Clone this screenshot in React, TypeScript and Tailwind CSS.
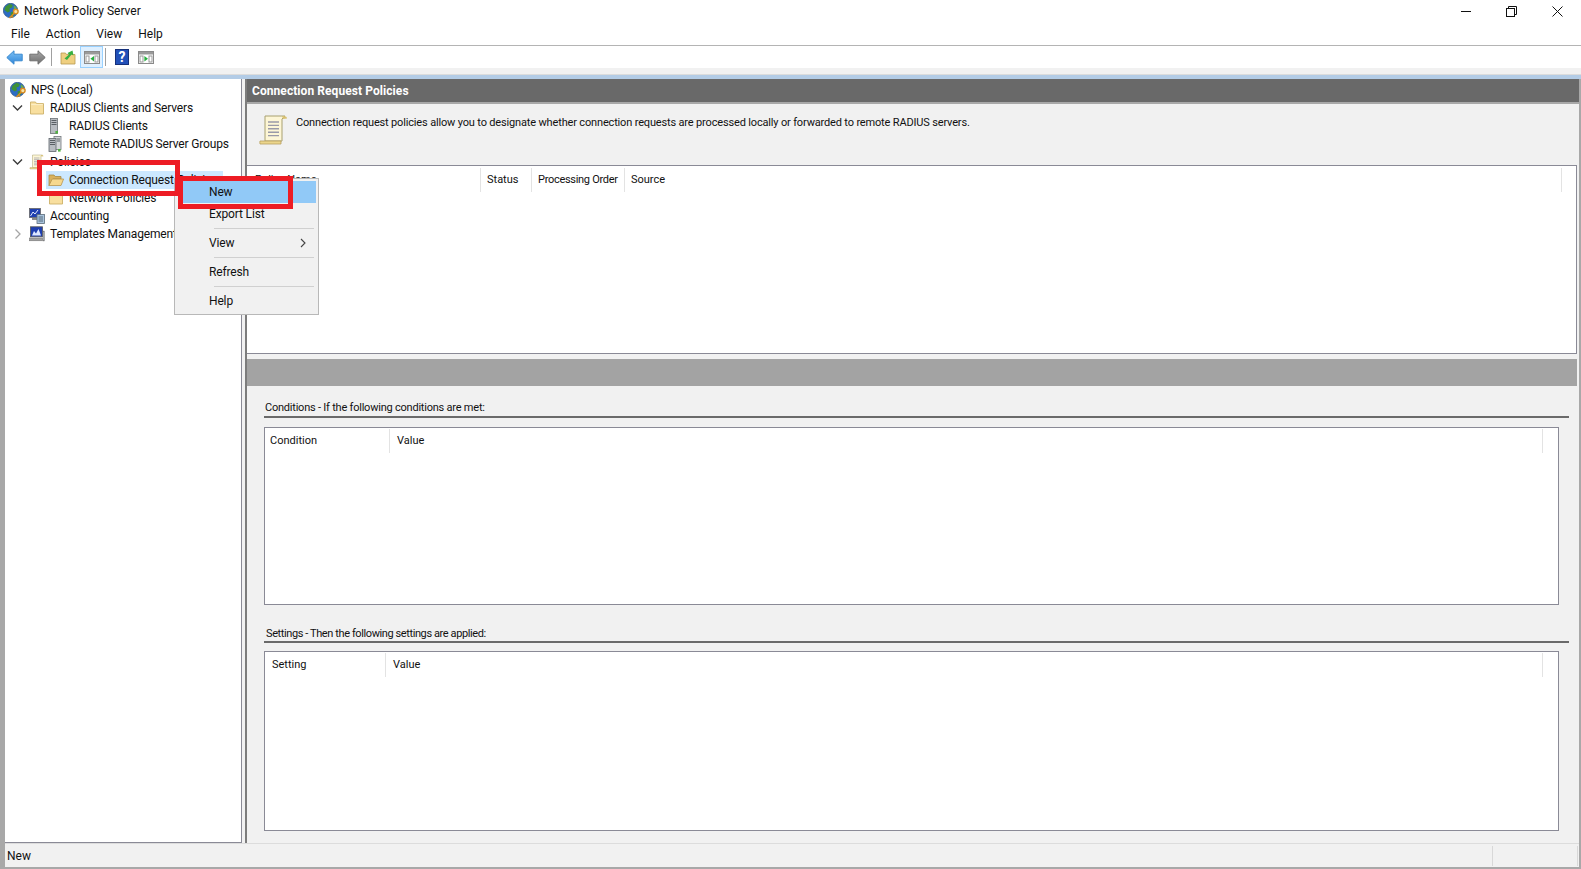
import React from "react";

const font = { fontFamily: 'Roboto, "Liberation Sans", sans-serif' };

function GlobeKey({ size = 17 }: { size?: number }) {
  return (
    <svg width={size} height={size} viewBox="0 0 17 17" className="shrink-0">
      <circle cx="7.5" cy="7.5" r="7.2" fill="#2c6cc4" stroke="#2a4f80" strokeWidth="0.7" />
      <path d="M2.6 3.4 L6.6 0.8 L9.8 2 L9 4.6 L6.4 5.4 L7 8.2 L4.6 9.4 L1.4 7 Z" fill="#3f9136" />
      <path d="M7.6 9.4 L10.6 8.4 L11.6 11 L9.6 14.2 L7.8 13.4 Z" fill="#3f9136" />
      <path d="M11 2.2 L13.6 4.4 L13 6.4 L10.6 5.2 Z" fill="#68ad48" />
      <circle cx="12.8" cy="8.6" r="2.3" fill="#f4e2a8" stroke="#d98c22" strokeWidth="1.4" />
      <path d="M11.2 10.3 L6.4 15 M8.4 13 L9.9 14.5" stroke="#d98c22" strokeWidth="1.6" fill="none" />
    </svg>
  );
}

function Folder({ open = false }: { open?: boolean }) {
  if (open)
    return (
      <svg width="16" height="16" viewBox="0 0 16 16" className="shrink-0">
        <path d="M1 13.5 V3 H6 L7.2 4.5 H13 V7 H5 Z" fill="#d9b25e" stroke="#a88a45" strokeWidth="0.8" />
        <path d="M1 13.5 L4.2 7 H15.6 L13 13.5 Z" fill="#f6d88e" stroke="#b89650" strokeWidth="0.8" />
      </svg>
    );
  return (
    <svg width="16" height="16" viewBox="0 0 16 16" className="shrink-0">
      <path d="M1.5 14 V2 H6.5 L7.5 3.6 H14.5 V14 Z" fill="#f8df9f" stroke="#cdb169" strokeWidth="0.9" />
      <path d="M2.2 4.6 H13.8" stroke="#fdf2ce" strokeWidth="0.9" />
    </svg>
  );
}

function ServerOne() {
  return (
    <svg width="16" height="16" viewBox="0 0 16 16" className="shrink-0">
      <rect x="2.5" y="0.5" width="7" height="15" fill="#b8bcc2" stroke="#6a7076" strokeWidth="0.8" />
      <path d="M3.5 2.5 H8.5 M3.5 4.5 H8.5 M3.5 6.5 H8.5" stroke="#4d5359" strokeWidth="0.9" />
      <rect x="7.4" y="13" width="2.6" height="2.6" fill="#52b043" />
    </svg>
  );
}

function ServerGroup() {
  return (
    <svg width="16" height="16" viewBox="0 0 16 16" className="shrink-0">
      <rect x="6" y="0.5" width="7" height="13" fill="#d4d7da" stroke="#70767c" strokeWidth="0.8" />
      <rect x="1" y="2.5" width="7" height="13" fill="#b8bcc2" stroke="#5f656c" strokeWidth="0.8" />
      <path d="M2 4.5 H7 M2 6.5 H7 M2 8.5 H7 M9 3 H12 M9 5 H12" stroke="#4d5359" strokeWidth="0.9" />
      <rect x="10" y="13" width="2.6" height="2.6" fill="#52b043" />
    </svg>
  );
}

function Scroll({ size = 16 }: { size?: number }) {
  return (
    <svg width={size} height={size} viewBox="0 0 16 16" className="shrink-0">
      <path d="M3.5 1 H13.5 L12 2.5 V13.5 H3.5 Z" fill="#fdf6d6" stroke="#a8a070" strokeWidth="0.5" />
      <path d="M12 1 Q14.5 1 14.5 2.2 L12.5 2.5 Z" fill="#d8c070" />
      <path d="M1 13.5 H11.5 V15 H1 Q0.8 14 1 13.5 Z" fill="#ecd68c" stroke="#b8a060" strokeWidth="0.4" />
      <path d="M5 4 H10.5 M5 5.7 H10.5 M5 7.4 H10.5 M5 9.1 H10.5 M5 10.8 H10.5" stroke="#9a9aa8" strokeWidth="0.7" />
    </svg>
  );
}

function Accounting() {
  return (
    <svg width="16" height="16" viewBox="0 0 16 16" className="shrink-0">
      <rect x="0.5" y="0.5" width="11" height="9" fill="#1f3fb0" stroke="#666" strokeWidth="0.8" />
      <path d="M1.5 8 L4 4 L6 6 L9 2" stroke="#dfe8ff" strokeWidth="1" fill="none" />
      <rect x="3" y="10" width="6" height="2" fill="#8a8a8a" />
      <rect x="8" y="6.5" width="7.5" height="9" fill="#a9c4dd" stroke="#5d6d7a" strokeWidth="0.8" />
      <path d="M9.5 9 H14 M9.5 11 H14 M9.5 13 H14" stroke="#456" strokeWidth="0.8" />
    </svg>
  );
}

function Templates() {
  return (
    <svg width="16" height="16" viewBox="0 0 16 16" className="shrink-0">
      <rect x="1.5" y="0.8" width="12" height="10" fill="#1f3fb0" stroke="#555" strokeWidth="0.8" />
      <path d="M3 9.5 L5 5 L7 7.5 L9.5 3 L12 9.5 Z" fill="#dfe8ff" />
      <rect x="0.5" y="12" width="13" height="2.8" fill="#a4a4a4" stroke="#6a6a6a" strokeWidth="0.5" />
      <rect x="14" y="5" width="1.6" height="10" fill="#b0b4b8" stroke="#777" strokeWidth="0.4" />
    </svg>
  );
}

function Chevron({ open }: { open: boolean }) {
  return (
    <svg width="11" height="10" viewBox="0 0 11 10" className="shrink-0">
      {open ? (
        <path d="M1 2.5 L5.5 7 L10 2.5" fill="none" stroke="#3c3c3c" strokeWidth="1.4" />
      ) : (
        <path d="M3.5 0.5 L8 5 L3.5 9.5" fill="none" stroke="#a6a6a6" strokeWidth="1.3" />
      )}
    </svg>
  );
}

function Arrow({ id, from, to, stroke, flip }: { id: string; from: string; to: string; stroke: string; flip?: boolean }) {
  return (
    <svg width="17" height="15" viewBox="0 0 17 15" className={flip ? "shrink-0 -scale-x-100" : "shrink-0"}>
      <defs>
        <linearGradient id={id} x1="0" y1="0" x2="0" y2="1">
          <stop offset="0" stopColor={from} />
          <stop offset="1" stopColor={to} />
        </linearGradient>
      </defs>
      <path d="M0.8 7.5 L8 0.8 V4.2 H16.2 V10.8 H8 V14.2 Z" fill={`url(#${id})`} stroke={stroke} strokeWidth="1" />
    </svg>
  );
}

function PaneIcon({ side }: { side: "left" | "right" }) {
  return (
    <svg width="16" height="13" viewBox="0 0 16 13" className="shrink-0">
      <rect x="0.5" y="0.5" width="15" height="12" fill="#fff" stroke="#8a8a8a" />
      <rect x="1" y="1" width="14" height="2.5" fill="#9a9a9a" />
      <rect x="2" y="5" width="3" height="6" fill="none" stroke="#9a9a9a" />
      <rect x="11" y="5" width="3" height="6" fill="none" stroke="#9a9a9a" />
      {side === "left" ? <path d="M10 5 V10.6 L6.4 7.8 Z" fill="#28b040" /> : <path d="M6.4 5 V10.6 L10 7.8 Z" fill="#28b040" />}
    </svg>
  );
}

function TreeRow({
  indent,
  chevron,
  icon,
  label,
}: {
  indent: "root" | "one" | "two";
  chevron?: "open" | "closed";
  icon: React.ReactNode;
  label: string;
}) {
  const pad = indent === "root" ? "pl-[5px]" : indent === "one" ? "pl-[7px]" : "pl-[43px]";
  return (
    <div className={`flex h-[18px] items-center whitespace-nowrap ${pad}`}>
      {indent === "one" && (
        <div className="flex w-[17px] shrink-0 items-center">{chevron && <Chevron open={chevron === "open"} />}</div>
      )}
      {icon}
      <span className={indent === "root" ? "ml-[4px]" : "ml-[5px]"}>{label}</span>
    </div>
  );
}

function ColumnHead({ w, label, pad = "pl-[7px]" }: { w: string; label: string; pad?: string }) {
  return (
    <div className={`flex h-[24px] shrink-0 items-center whitespace-nowrap border-r border-[#e3e3e3] ${w} ${pad}`}>{label}</div>
  );
}

function MenuSep() {
  return <div className="ml-[31px] mr-[2px] my-[3px] h-px bg-[#d0d0d0]" />;
}

function MenuItem({ label, active, arrow }: { label: string; active?: boolean; arrow?: boolean }) {
  return (
    <div className={`flex h-[22px] items-center justify-between pl-[26px] pr-[9px] ${active ? "bg-[#91c9f7]" : ""}`}>
      <span>{label}</span>
      {arrow && (
        <svg width="8" height="10" viewBox="0 0 8 10">
          <path d="M2 1 L6 5 L2 9" fill="none" stroke="#444" strokeWidth="1.1" />
        </svg>
      )}
    </div>
  );
}

export default function App() {
  return (
    <div style={font} className="relative flex h-[869px] w-[1581px] flex-col overflow-hidden bg-white text-[12px] text-[#111]">
      {/* title bar */}
      <div className="flex h-[22px] shrink-0 items-center pl-[3px]">
        <GlobeKey />
        <span className="ml-[4px]">Network Policy Server</span>
        <div className="ml-auto flex items-center pr-[18px]">
          <svg width="11" height="11" viewBox="0 0 11 11"><path d="M0 5.5 H10" stroke="#111" strokeWidth="1" /></svg>
          <svg width="11" height="11" viewBox="0 0 11 11" className="ml-[34px]">
            <rect x="0.5" y="2.5" width="8" height="8" fill="none" stroke="#111" />
            <path d="M2.5 2.5 V0.5 H10.5 V8.5 H8.5" fill="none" stroke="#111" />
          </svg>
          <svg width="11" height="11" viewBox="0 0 11 11" className="ml-[35px]">
            <path d="M0.5 0.5 L10.5 10.5 M10.5 0.5 L0.5 10.5" stroke="#111" strokeWidth="1" />
          </svg>
        </div>
      </div>

      {/* menu bar */}
      <div className="flex h-[24px] shrink-0 items-center gap-[16px] border-b border-[#b4b4b4] pl-[11px]">
        <span>File</span>
        <span>Action</span>
        <span>View</span>
        <span>Help</span>
      </div>

      {/* toolbar */}
      <div className="flex h-[22px] shrink-0 items-center pl-[6px]">
        <Arrow id="back" from="#7cc0f5" to="#2f86d8" stroke="#3a8ad0" />
        <div className="ml-[6px]"><Arrow id="fwd" from="#a8a8a8" to="#6e6e6e" stroke="#707070" flip /></div>
        <div className="ml-[5px] h-[18px] w-px bg-[#a0a0a0]" />
        <svg width="16" height="16" viewBox="0 0 16 16" className="ml-[8px] shrink-0">
          <path d="M1 15 V4 H5.5 L6.5 5.5 H15 V15 Z" fill="#efcf80" stroke="#b89a50" strokeWidth="0.8" />
          <path d="M4.5 9.5 L9 5.5 L7.5 4 L12.5 1.5 L13.5 6.5 L11.5 5.5 L7 11 Z" fill="#38b040" />
        </svg>
        <div className="ml-[4px] flex h-[22px] w-[23px] items-center justify-center border border-[#99d1ff] bg-[#dff0ff]">
          <PaneIcon side="left" />
        </div>
        <div className="ml-[2px] h-[18px] w-px bg-[#a0a0a0]" />
        <div className="ml-[9px] flex h-[16px] w-[14px] items-center justify-center border border-[#15307a] bg-[#2150b8] text-[14px] font-bold leading-none text-white">?</div>
        <div className="ml-[9px]"><PaneIcon side="right" /></div>
      </div>

      {/* dotted strip */}
      <div className="h-[7px] shrink-0 border-b border-[#dcdcdc] bg-[#f1f1f1]" />
      <div className="h-[4px] shrink-0 bg-[#b3cce6]" />

      {/* workspace */}
      <div className="flex min-h-0 flex-1 flex-col bg-[#a8a8a8] pb-[2px] pl-[5px] pr-[2px]">
        <div className="flex min-h-0 flex-1">
          {/* tree */}
          <div className="relative w-[237px] shrink-0 border-b border-r border-[#8a8a96] bg-white pt-[2px] tracking-[-0.15px]">
            <TreeRow indent="root" icon={<GlobeKey size={17} />} label="NPS (Local)" />
            <TreeRow indent="one" chevron="open" icon={<Folder />} label="RADIUS Clients and Servers" />
            <TreeRow indent="two" icon={<ServerOne />} label="RADIUS Clients" />
            <TreeRow indent="two" icon={<ServerGroup />} label="Remote RADIUS Server Groups" />
            <TreeRow indent="one" chevron="open" icon={<Scroll />} label="Policies" />
            <div className="ml-[41px] mr-[18px] bg-[#cce8ff] pl-[2px]">
              <div className="flex h-[18px] items-center whitespace-nowrap">
                <Folder open />
                <span className="ml-[5px]">Connection Request Policies</span>
              </div>
            </div>
            <TreeRow indent="two" icon={<Folder />} label="Network Policies" />
            <TreeRow indent="one" icon={<Accounting />} label="Accounting" />
            <TreeRow indent="one" chevron="closed" icon={<Templates />} label="Templates Management" />
          </div>

          {/* splitter */}
          <div className="w-[3px] shrink-0 bg-[#f1f1f1]" />

          {/* right pane */}
          <div className="flex min-w-0 flex-1 flex-col border-l-2 border-[#7c7c7c] bg-[#f1f1f1] text-[11px]">
            <div className="flex h-[23px] shrink-0 items-center bg-[#696969] pl-[5px] text-[12px] font-bold tracking-[0.07px] text-white">
              Connection Request Policies
            </div>
            <div className="flex h-[63px] shrink-0 gap-[6px] border-t-2 border-[#a8a8a8] pl-[11px] pt-[10px]">
              <Scroll size={32} />
              <span className="pt-[2px] leading-[14px] tracking-[-0.16px]">
                Connection request policies allow you to designate whether connection requests are processed locally or forwarded to remote RADIUS servers.
              </span>
            </div>
            <div className="mr-[2px] flex h-[189px] shrink-0 items-start border border-l-0 border-[#8a8a96] bg-white pt-[2px]">
              <ColumnHead w="w-[234px]" label="Policy Name" pad="pl-[8px]" />
              <ColumnHead w="w-[51px]" label="Status" pad="pl-[6px]" />
              <div className="flex h-[24px] w-[93px] shrink-0 items-center whitespace-nowrap border-r border-[#e3e3e3] pl-[6px] tracking-[-0.3px]">Processing Order</div>
              <div className="flex h-[24px] flex-1 items-center border-r border-[#e3e3e3] pl-[6px]">Source</div>
              <div className="w-[14px]" />
            </div>
            <div className="mr-[2px] mt-[5px] h-[27px] shrink-0 bg-[#a3a3a3]" />

            <div className="flex h-[30px] shrink-0 items-end pb-[1px] pl-[18px] pr-[10px]"><span className="leading-[14px] tracking-[-0.22px]">Conditions - If the following conditions are met:</span></div>
            <div className="ml-[17px] mr-[10px] h-[2px] shrink-0 bg-[#6a6a6a]" />
            <div className="ml-[17px] mr-[20px] mt-[9px] flex h-[178px] shrink-0 items-start border border-[#8a8a96] bg-white pt-px">
              <ColumnHead w="w-[125px]" label="Condition" pad="pl-[5px]" />
              <div className="flex h-[24px] flex-1 items-center border-r border-[#e3e3e3] pl-[7px]">Value</div>
              <div className="w-[15px]" />
            </div>

            <div className="flex h-[36px] shrink-0 items-end pl-[19px] pr-[10px]"><span className="leading-[14px] tracking-[-0.4px]">Settings - Then the following settings are applied:</span></div>
            <div className="ml-[17px] mr-[10px] h-[2px] shrink-0 bg-[#6a6a6a]" />
            <div className="ml-[17px] mr-[20px] mt-[8px] flex h-[180px] shrink-0 items-start border border-[#8a8a96] bg-white pt-px">
              <ColumnHead w="w-[121px]" label="Setting" pad="pl-[7px]" />
              <div className="flex h-[24px] flex-1 items-center border-r border-[#e3e3e3] pl-[7px]">Value</div>
              <div className="w-[15px]" />
            </div>
          </div>
        </div>

        {/* status bar */}
        <div className="flex h-[24px] shrink-0 items-center border-t border-[#dcdcdc] bg-[#f1f1f1] pl-[2px]">
          <span className="flex-1">New</span>
          <div className="h-[20px] w-px bg-[#d8d8d8]" />
          <div className="w-[84px]" />
          <div className="h-[20px] w-px bg-[#d8d8d8]" />
          <div className="w-[1px]" />
        </div>
      </div>

      {/* context menu */}
      <div className="absolute left-[174px] top-[178px] h-[137px] w-[145px] border border-[#b8b8b8] bg-[#f1f1f1] pl-[8px] pr-[2px] pt-[2px] tracking-[-0.15px]">
        <MenuItem label="New" active />
        <MenuItem label="Export List" />
        <MenuSep />
        <MenuItem label="View" arrow />
        <MenuSep />
        <MenuItem label="Refresh" />
        <MenuSep />
        <MenuItem label="Help" />
      </div>

      {/* red highlight frames */}
      <div className="pointer-events-none absolute left-[37px] top-[160px] h-[36px] w-[143px] border-[5px] border-[#ed1c24]" />
      <div className="pointer-events-none absolute left-[178px] top-[176px] h-[33px] w-[115px] border-[5px] border-[#ed1c24]" />
    </div>
  );
}
